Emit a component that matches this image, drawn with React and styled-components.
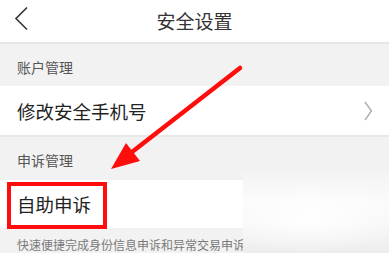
import React from "react";
import styled, { createGlobalStyle } from "styled-components";

const Global = createGlobalStyle`
  html, body { margin: 0; padding: 0; background: #ffffff; }
  body { font-family: "Noto Sans CJK SC", "Noto Sans", sans-serif; }
  * { box-sizing: border-box; }
`;

const Page = styled.div`
  position: relative;
  width: 389px;
  height: 253px;
  overflow: hidden;
  background: #f2f2f2;
`;

const Header = styled.header`
  position: relative;
  height: 44px;
  background: #ffffff;
  border-bottom: 2px solid #e6e6e6;
  display: flex;
  align-items: center;
  justify-content: center;
`;

const Back = styled.div`
  position: absolute;
  left: 13px;
  top: 6px;
  width: 18px;
  height: 26px;
  display: flex;
`;

const Title = styled.h1`
  margin: 0;
  font-size: 19px;
  font-weight: 400;
  line-height: 20px;
  color: #333333;
  letter-spacing: 0;
`;

const SectionLabel = styled.div`
  height: ${(p) => p.$h}px;
  padding: 3px 0 0 17px;
  display: flex;
  align-items: center;
  font-size: 14px;
  line-height: 14px;
  color: #555555;
  background: #f2f2f2;
`;

const Row = styled.div`
  position: relative;
  height: ${(p) => p.$h}px;
  padding: 0 16px 0 17px;
  display: flex;
  align-items: center;
  justify-content: space-between;
  background: #ffffff;
  border-bottom: ${(p) => (p.$border ? "2px solid #e8e8e8" : "none")};
  font-size: 18.5px;
  line-height: 20px;
  color: #222222;
`;

const Chevron = styled.svg`
  width: 10px;
  height: 20px;
`;

const Highlight = styled.div`
  position: absolute;
  left: 7px;
  top: 2px;
  width: 100px;
  height: 47px;
  border: 4px solid #ff0c0c;
`;

const Desc = styled.div`
  padding: 9px 0 0 17px;
  font-size: 12px;
  line-height: 16px;
  color: #7a7a7a;
  white-space: nowrap;
`;

const Blur = styled.div`
  position: absolute;
  left: 243px;
  top: 173px;
  right: 0;
  bottom: 0;
  background:
    radial-gradient(ellipse 70% 45% at 45% 55%, rgba(255,255,255,0.95), rgba(255,255,255,0) 100%),
    linear-gradient(180deg, #f4f4f4 0%, #fafafa 35%, #f6f6f6 65%, #ededed 100%);
`;

const ArrowLayer = styled.svg`
  position: absolute;
  left: 0;
  top: 0;
  width: 389px;
  height: 253px;
  pointer-events: none;
`;

export default function App() {
  return (
    <>
      <Global />
      <Page>
        <Header>
          <Back>
            <svg width="18" height="26" viewBox="0 0 18 26">
              <polyline points="14,1.5 3,12.5 14,23.5" fill="none" stroke="#333" strokeWidth="1.6" />
            </svg>
          </Back>
          <Title>安全设置</Title>
        </Header>
        <SectionLabel $h={42}>账户管理</SectionLabel>
        <Row $h={51} $border>
          <span>修改安全手机号</span>
          <Chevron viewBox="0 0 10 20">
            <polyline points="2,1 8.5,10 2,19" fill="none" stroke="#aaaaaa" strokeWidth="1.3" />
          </Chevron>
        </Row>
        <SectionLabel $h={43}>申诉管理</SectionLabel>
        <Row $h={48}>
          <span>自助申诉</span>
          <Highlight />
        </Row>
        <Desc>快速便捷完成身份信息申诉和异常交易申诉</Desc>
        <Blur />
        <ArrowLayer viewBox="0 0 389 253">
          <line x1="240" y1="68" x2="132" y2="152" stroke="#ff0c0c" strokeWidth="4.5" strokeLinecap="round" />
          <polygon points="111,169 126,143 140,161" fill="#ff0c0c" />
        </ArrowLayer>
      </Page>
    </>
  );
}
